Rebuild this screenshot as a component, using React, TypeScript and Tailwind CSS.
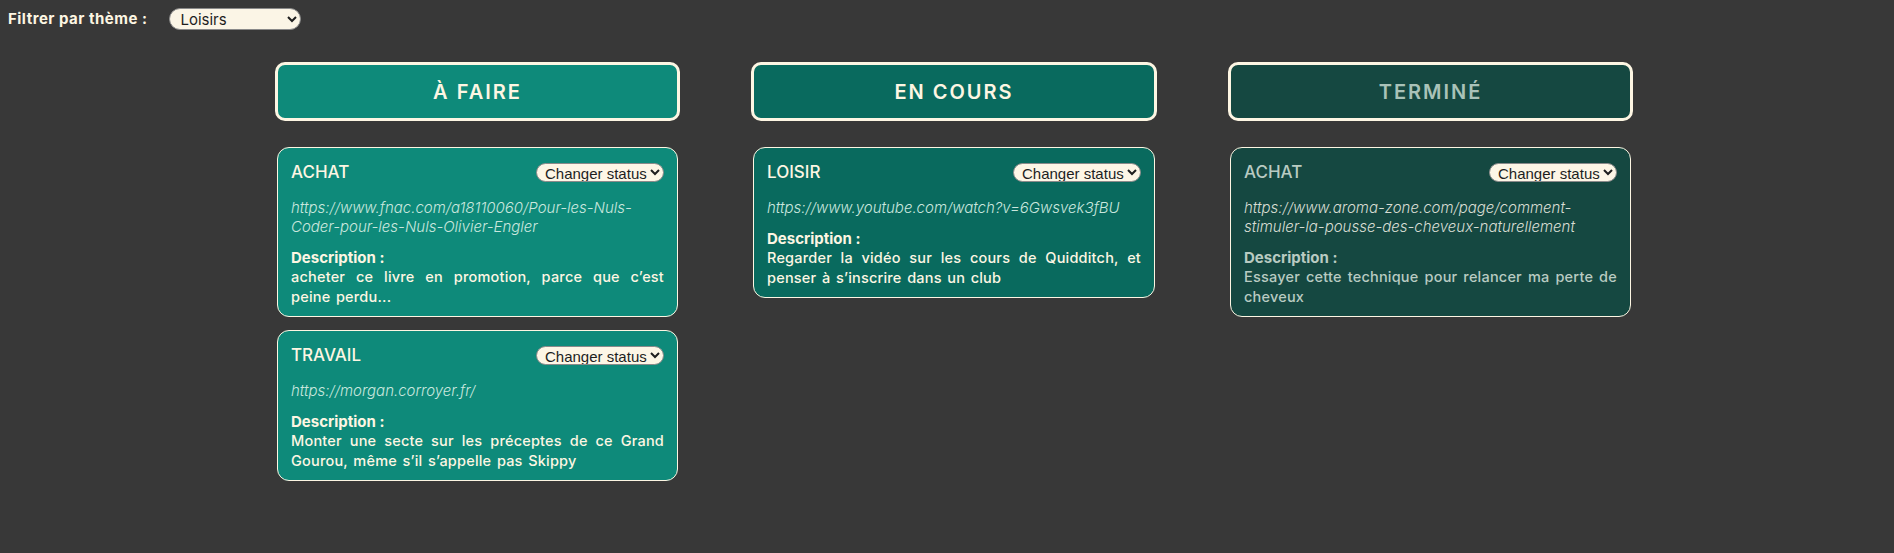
import React from "react";

type Card = { theme: string; url: string; desc: string };

const columns: {
  title: string;
  bg: string;
  titleColor: string;
  cards: Card[];
}[] = [
  {
    title: "À FAIRE",
    bg: "bg-[#0e8a7a]",
    titleColor: "text-[#fdf6e3]",
    cards: [
      {
        theme: "ACHAT",
        url: "https://www.fnac.com/a18110060/Pour-les-Nuls-Coder-pour-les-Nuls-Olivier-Engler",
        desc: "acheter ce livre en promotion, parce que c’est peine perdu...",
      },
      {
        theme: "TRAVAIL",
        url: "https://morgan.corroyer.fr/",
        desc: "Monter une secte sur les préceptes de ce Grand Gourou, même s’il s’appelle pas Skippy",
      },
    ],
  },
  {
    title: "EN COURS",
    bg: "bg-[#096a5e]",
    titleColor: "text-[#fdf6e3]",
    cards: [
      {
        theme: "LOISIR",
        url: "https://www.youtube.com/watch?v=6Gwsvek3fBU",
        desc: "Regarder la vidéo sur les cours de Quidditch, et penser à s’inscrire dans un club",
      },
    ],
  },
  {
    title: "TERMINÉ",
    bg: "bg-[#154841]",
    titleColor: "text-[#a9c2b8]",
    cards: [
      {
        theme: "ACHAT",
        url: "https://www.aroma-zone.com/page/comment-stimuler-la-pousse-des-cheveux-naturellement",
        desc: "Essayer cette technique pour relancer ma perte de cheveux",
      },
    ],
  },
];

function CardView({ card, done, bg }: { card: Card; done: boolean; bg: string }) {
  const main = done ? "text-[#b9cbc2]" : "text-[#fdf6e3]";
  return (
    <div className={`${bg} mx-[2px] rounded-[12px] border border-[#fdf6e3] px-[13px] pt-[12px] pb-[9px]`}>
      <div className="flex items-center justify-between">
        <span className={`text-[17px] leading-[24px] font-medium ${main}`}>{card.theme}</span>
        <select
          defaultValue=""
          className="h-[19px] rounded-full border border-[#8a8a8a] bg-[#fdf6e6] text-[15px] leading-[17px] text-[#1e1e1e] font-['Liberation_Sans',Arial,sans-serif] pl-[4px]"
        >
          <option value="">Changer status</option>
          <option>À faire</option>
          <option>En cours</option>
          <option>Terminé</option>
        </select>
      </div>
      <p
        className={`mt-[14px] text-[15px] leading-[19px] italic font-light break-words ${
          done ? "text-[#d8ddd3]" : "text-[#c9e7de]"
        }`}
      >
        {card.url}
      </p>
      <p className={`mt-[12px] text-[15px] leading-[19px] font-bold ${main}`}>Description :</p>
      <p
        className={`text-[14.5px] leading-[20px] font-medium tracking-[0.2px] [word-spacing:1.5px] text-justify ${main}`}
      >
        {card.desc}
      </p>
    </div>
  );
}

export default function App() {
  return (
    <div className="min-h-screen w-full bg-[#383838] font-['Inter','Noto_Sans',sans-serif]">
      <div className="flex items-center pl-[8px] pt-[8px]">
        <span className="text-[15px] font-bold tracking-[0.5px] text-[#fdf6e3] leading-[22px]">
          Filtrer par thème :
        </span>
        <select
          defaultValue="Loisirs"
          className="ml-[22px] h-[22px] w-[132px] rounded-[11px] border border-[#8a8a8a] bg-[#fbf5e6] pl-[6px] text-[15px] leading-[20px] text-[#1e1e1e]"
        >
          <option>Tous</option>
          <option>Achat</option>
          <option>Travail</option>
          <option>Loisirs</option>
        </select>
      </div>
      <div className="ml-[275px] mt-[32px] grid grid-cols-[405px_406px_405px] gap-x-[71px] items-start">
        {columns.map((col, i) => (
          <div key={col.title} className="flex flex-col">
            <div
              className={`h-[59px] rounded-[10px] border-[3px] border-[#fdf6e3] ${col.bg} flex items-center justify-center`}
            >
              <span className={`text-[20px] font-semibold tracking-[2px] ${col.titleColor}`}>
                {col.title}
              </span>
            </div>
            <div className="mt-[26px] flex flex-col gap-[13px]">
              {col.cards.map((c, j) => (
                <CardView key={j} card={c} done={i === 2} bg={col.bg} />
              ))}
            </div>
          </div>
        ))}
      </div>
    </div>
  );
}
